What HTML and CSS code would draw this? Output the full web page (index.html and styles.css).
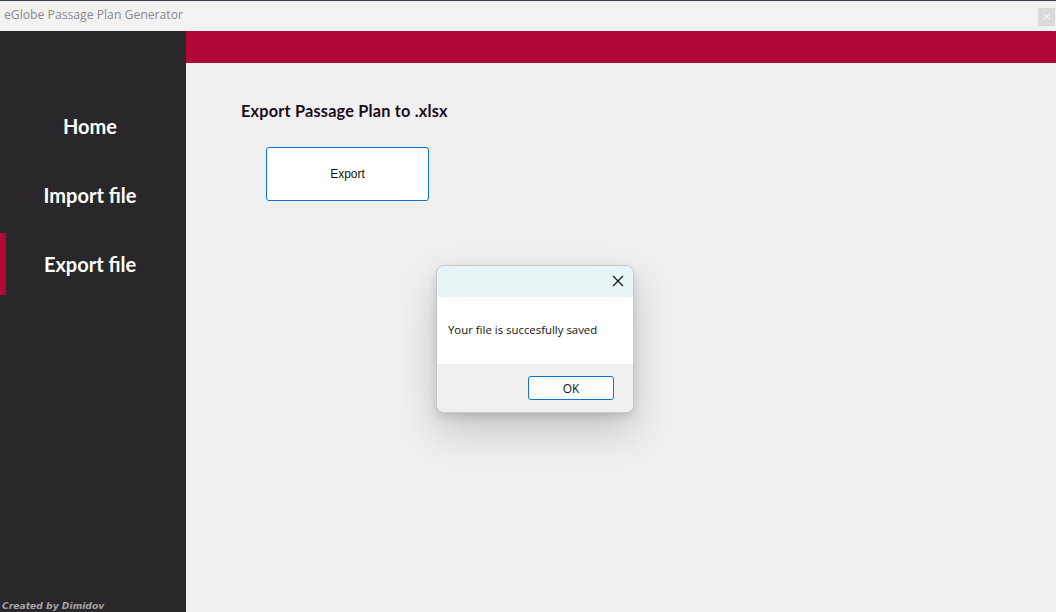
FILE: index.html
```html
<!DOCTYPE html>
<html>
<head>
<meta charset="utf-8">
<link rel="stylesheet" href="styles.css">
</head>
<body>
<div class="window">
  <div class="titlebar">
    <span class="title">eGlobe Passage Plan Generator</span>
    <span class="tclose">×</span>
  </div>
  <div class="app">
    <aside class="sidebar">
      <nav class="nav">
        <div class="nav-item">Home</div>
        <div class="nav-item">Import file</div>
        <div class="nav-item active">Export file</div>
      </nav>
      <div class="credit">Created by Dimidov</div>
    </aside>
    <main class="main">
      <div class="banner"></div>
      <section class="content">
        <h1 class="heading">Export Passage Plan to .xlsx</h1>
        <button class="export-btn">Export</button>
      </section>
    </main>
  </div>
  <div class="dialog">
    <div class="dlg-head">
      <svg class="dlg-x" width="12" height="12" viewBox="0 0 12 12"><path d="M1 1 L11 11 M11 1 L1 11" stroke="#1a1a1a" stroke-width="1.3" fill="none"/></svg>
    </div>
    <div class="dlg-body">Your file is succesfully saved</div>
    <div class="dlg-foot"><button class="ok-btn">OK</button></div>
  </div>
</div>
</body>
</html>
```
FILE: styles.css
```css
* { box-sizing: border-box; }
html, body { margin: 0; padding: 0; }
body { width: 1056px; height: 612px; overflow: hidden; background: #f0f0f0; }
.window { position: relative; width: 1056px; height: 612px; border-top: 1px solid #3b3b47; display: flex; flex-direction: column; }
.titlebar { height: 30px; background: #f2f2f2; display: flex; align-items: center; justify-content: space-between; padding: 0 1px 0 4px; }
.title { font-family: "Open Sans", "Noto Sans", sans-serif; font-size: 12.2px; color: #8a8a8a; margin-top: -3px; }
.tclose { width: 17px; height: 18px; background: #dadada; color: #f4f4f4; font-family: "DejaVu Sans", sans-serif; font-size: 11px; display: flex; align-items: center; justify-content: center; margin-top: 1px; }
.app { flex: 1; display: flex; }
.sidebar { width: 186px; background: #292729; display: flex; flex-direction: column; justify-content: space-between; }
.nav { padding-top: 64px; display: flex; flex-direction: column; gap: 7px; }
.nav-item { height: 62px; display: flex; align-items: center; justify-content: center; color: #ffffff; font-family: "Lato", "Open Sans", sans-serif; font-weight: 700; font-size: 20px; position: relative; padding-right: 6px; }
.nav-item.active::before { content: ""; position: absolute; left: 0; top: 0; width: 6px; height: 62px; background: #b20838; }
.credit { font-family: "DejaVu Sans", sans-serif; font-style: italic; font-weight: 700; font-size: 9.2px; color: #a4a4a4; padding: 0 0 1px 2px; }
.main { flex: 1; display: flex; flex-direction: column; }
.banner { height: 32px; background: #b20838; }
.content { padding: 38px 0 0 55px; display: flex; flex-direction: column; align-items: flex-start; }
.heading { margin: 0; font-family: "Lato", "Open Sans", sans-serif; font-weight: 700; font-size: 16.3px; letter-spacing: 0.2px; color: #1a0d1c; line-height: 20px; }
.export-btn { margin: 26px 0 0 25px; width: 163px; height: 54px; background: #ffffff; border: 1px solid #0a74d0; border-radius: 3px; font-family: "Liberation Sans", "Open Sans", sans-serif; font-size: 12px; color: #111; padding: 0; }
.dialog { position: absolute; left: 436px; top: 264px; width: 198px; height: 148px; border: 1px solid #c8c8c8; border-radius: 8px; overflow: hidden; box-shadow: 0 18px 40px rgba(0,0,0,0.18), 0 4px 10px rgba(0,0,0,0.12); display: flex; flex-direction: column; background: #f0f0f0; }
.dlg-head { height: 31px; background: #e7f5f7; display: flex; justify-content: flex-end; align-items: center; padding-right: 9px; padding-bottom: 1px; }
.dlg-body { height: 67px; background: #ffffff; font-family: "Open Sans", "Noto Sans", sans-serif; font-size: 11.4px; color: #111; display: flex; align-items: center; padding-left: 11px; padding-bottom: 2px; }
.dlg-foot { flex: 1; background: #f0f0f0; display: flex; justify-content: flex-end; align-items: flex-start; padding: 12px 19px 0 0; }
.ok-btn { width: 86px; height: 24px; background: #fdfdfd; border: 1px solid #0a74d0; border-radius: 3px; font-family: "Open Sans", "Noto Sans", sans-serif; font-size: 12px; color: #111; padding: 0; }
```
